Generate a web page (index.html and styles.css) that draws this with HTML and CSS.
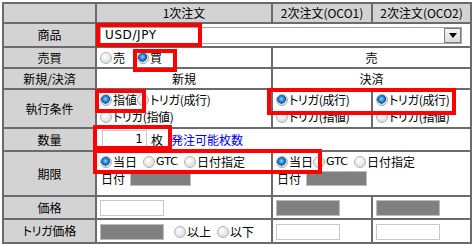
FILE: index.html
```html
<!DOCTYPE html>
<html lang="ja">
<head>
<meta charset="utf-8">
<title>注文</title>
<link rel="stylesheet" href="styles.css">
</head>
<body>
<div class="page">
  <table class="order">
    <colgroup>
      <col class="c-label"><col class="c-first"><col class="c-oco"><col class="c-oco2">
    </colgroup>
    <tr class="r-head">
      <th></th><th>1次注文</th><th>2次注文(OCO1)</th><th>2次注文(OCO2)</th>
    </tr>
    <tr class="r-item">
      <th>商品</th>
      <td colspan="3"><div class="select"><span class="sel-text">USD/JPY</span><span class="sel-btn"><span class="tri"></span></span></div></td>
    </tr>
    <tr class="r-side">
      <th>売買</th>
      <td><span class="opt"><span class="radio"></span>売</span><span class="opt gap"><span class="radio on"></span>買</span></td>
      <td colspan="2" class="center">売</td>
    </tr>
    <tr class="r-kind">
      <th>新規/決済</th>
      <td class="center">新規</td>
      <td colspan="2" class="center">決済</td>
    </tr>
    <tr class="r-exec">
      <th>執行条件</th>
      <td class="top">
        <div class="line"><span class="opt"><span class="radio on"></span>指値</span><span class="opt"><span class="radio"></span><span class="kana">トリガ(成行)</span></span></div>
        <div class="line"><span class="opt"><span class="radio"></span><span class="kana">トリガ(指値)</span></span></div>
      </td>
      <td class="top">
        <div class="line"><span class="opt"><span class="radio on"></span><span class="kana">トリガ(成行)</span></span></div>
        <div class="line"><span class="opt"><span class="radio"></span><span class="kana">トリガ(指値)</span></span></div>
      </td>
      <td class="top">
        <div class="line"><span class="opt"><span class="radio on"></span><span class="kana">トリガ(成行)</span></span></div>
        <div class="line"><span class="opt"><span class="radio"></span><span class="kana">トリガ(指値)</span></span></div>
      </td>
    </tr>
    <tr class="r-qty">
      <th>数量</th>
      <td colspan="3"><span class="box qty">1</span><span class="unit">枚</span><a class="link" href="#">発注可能枚数</a></td>
    </tr>
    <tr class="r-term">
      <th>期限</th>
      <td class="top">
        <div class="line"><span class="opt"><span class="radio on"></span>当日</span><span class="opt sp"><span class="radio"></span><span class="lat">GTC</span></span><span class="opt sp"><span class="radio"></span>日付指定</span></div>
        <div class="line"><span class="lbl">日付</span><span class="box dis date"></span></div>
      </td>
      <td colspan="2" class="top">
        <div class="line"><span class="opt"><span class="radio on"></span>当日</span><span class="opt"><span class="radio"></span><span class="lat">GTC</span></span><span class="opt sp"><span class="radio"></span>日付指定</span></div>
        <div class="line"><span class="lbl">日付</span><span class="box dis date"></span></div>
      </td>
    </tr>
    <tr class="r-price">
      <th>価格</th>
      <td><span class="box price"></span></td>
      <td><span class="box dis price"></span></td>
      <td><span class="box dis price"></span></td>
    </tr>
    <tr class="r-trig">
      <th><span class="kana">トリガ</span>価格</th>
      <td><span class="box dis price"></span><span class="opt sp2"><span class="radio"></span>以上</span><span class="opt sp"><span class="radio"></span>以下</span></td>
      <td><span class="box price"></span></td>
      <td><span class="box price"></span></td>
    </tr>
  </table>

  <div class="mark m-item"></div>
  <div class="mark m-buy"></div>
  <div class="mark m-limit"></div>
  <div class="mark m-oco"></div>
  <div class="mark m-qty"></div>
  <div class="mark m-term"></div>
</div>
</body>
</html>
```

FILE: styles.css
```css
html, body {
  margin: 0;
  padding: 0;
  background: #ffffff;
}

.page {
  position: relative;
  width: 474px;
  height: 245px;
  padding: 2px 0 0 2px;
  box-sizing: border-box;
  font-family: "Noto Sans CJK JP", "DejaVu Sans", sans-serif;
  font-size: 12px;
  color: #000;
}

.order {
  border-collapse: collapse;
  table-layout: fixed;
  width: 470px;
}

.c-label { width: 93px; }
.c-first { width: 176px; }
.c-oco { width: 100px; }
.c-oco2 { width: 99px; }

.order th,
.order td {
  border: 2px solid #6b6b6b;
  padding: 0 0 0 3px;
  line-height: 16px;
  white-space: nowrap;
  overflow: hidden;
  vertical-align: middle;
}

.order th {
  background: #d3d3d3;
  font-weight: normal;
  text-align: center;
  padding: 0;
}

.r-head th { height: 18px; }
.r-item th, .r-item td { height: 22px; }
.r-side th, .r-side td { height: 19px; }
.r-kind th, .r-kind td { height: 19px; }
.r-exec th, .r-exec td { height: 36px; }
.r-qty th, .r-qty td { height: 21px; }
.r-term th, .r-term td { height: 42px; }
.r-price th, .r-price td { height: 21px; }
.r-trig th, .r-trig td { height: 22px; }

.order td.center { text-align: center; padding: 0; }
.order td.top { vertical-align: top; padding-top: 1px; }

.kana {
  font-feature-settings: "palt";
  letter-spacing: -0.3px;
}

.line {
  display: flex;
  align-items: center;
  height: 17px;
}

.opt {
  display: inline-flex;
  align-items: center;
  vertical-align: middle;
}
.opt.gap { margin-left: 12px; }
.opt.sp { margin-left: 6px; }
.opt.sp2 { margin-left: 10px; }

.lat {
  font-family: "DejaVu Sans", sans-serif;
  font-size: 11px;
}

.radio {
  display: inline-block;
  box-sizing: border-box;
  width: 12px;
  height: 12px;
  border-radius: 50%;
  border: 1px solid #b4b4b4;
  background: radial-gradient(circle at 40% 35%, #ffffff 0%, #e6e6e6 55%, #cfcfcf 100%);
  margin-right: 1px;
}
.radio.on {
  background:
    radial-gradient(circle at 45% 40%, #8fd4ff 0%, #1a7fd0 35%, #0b4f96 55%, transparent 58%),
    radial-gradient(circle at 40% 35%, #ffffff 0%, #e6e6e6 55%, #cfcfcf 100%);
}

.select {
  display: flex;
  align-items: stretch;
  box-sizing: border-box;
  width: 362px;
  height: 17px;
  border: 1px solid #a5a5a5;
  background: #fff;
  font-family: "DejaVu Sans", sans-serif;
  font-size: 12px;
  letter-spacing: 0.6px;
}
.sel-text {
  flex: 1;
  padding-left: 4px;
  line-height: 15px;
}
.sel-btn {
  box-sizing: border-box;
  width: 17px;
  border: 1px solid #7c7c7c;
  background: linear-gradient(#f4f4f4, #dcdcdc);
  display: flex;
  align-items: center;
  justify-content: center;
}
.tri {
  width: 0;
  height: 0;
  border-left: 4px solid transparent;
  border-right: 4px solid transparent;
  border-top: 5px solid #000;
}

.box {
  display: inline-block;
  box-sizing: border-box;
  vertical-align: middle;
  border: 1px solid #c8c8c8;
  background: #fff;
  height: 16px;
}
.box.dis {
  background: #808080;
  border-color: #bdbdbd;
}
.box.price { width: 64px; height: 16px; }
.box.date { width: 61px; height: 15px; margin-left: 5px; }
.box.qty {
  width: 45px;
  height: 19px;
  text-align: right;
  padding-right: 3px;
  line-height: 17px;
  margin-left: 2px;
  font-family: "DejaVu Sans", sans-serif;
}

.unit { margin-left: 4px; vertical-align: middle; }
.link {
  color: #0000ff;
  text-decoration: none;
  margin-left: 8px;
  vertical-align: middle;
}
.lbl { margin-left: 1px; }

.mark {
  position: absolute;
  box-sizing: border-box;
  border: 4px solid #ff0000;
}
.m-item { left: 96px; top: 23px; width: 106px; height: 24px; }
.m-buy { left: 133px; top: 49px; width: 44px; height: 23px; }
.m-limit { left: 95px; top: 89px; width: 51px; height: 24px; }
.m-oco { left: 267px; top: 88px; width: 189px; height: 27px; }
.m-qty { left: 93px; top: 125px; width: 79px; height: 25px; }
.m-term { left: 93px; top: 149px; width: 229px; height: 25px; }
```
